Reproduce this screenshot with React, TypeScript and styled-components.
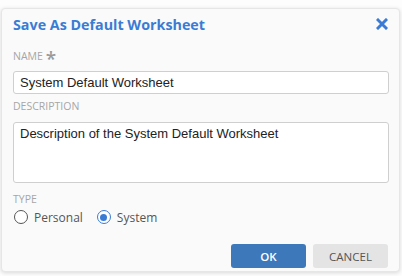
import styled, { createGlobalStyle } from "styled-components";

const GlobalStyle = createGlobalStyle`
  html, body {
    margin: 0;
    padding: 0;
    background: #fdfdfd;
  }
`;

const Page = styled.div`
  width: 402px;
  height: 276px;
  padding: 8px 2px 0 1px;
  box-sizing: border-box;
  overflow: hidden;
`;

const Dialog = styled.div`
  background: #fafafa;
  border: 1px solid #e6e6e6;
  border-radius: 4px;
  box-shadow: 0 1px 4px rgba(0, 0, 0, 0.15);
  height: 264px;
  box-sizing: border-box;
  padding: 0 10px 0 11px;
  display: flex;
  flex-direction: column;
  font-family: "Open Sans", "Noto Sans", sans-serif;
`;

const Header = styled.div`
  display: flex;
  justify-content: space-between;
  align-items: center;
  height: 30px;
`;

const Title = styled.h2`
  margin: 0;
  font-size: 14.3px;
  font-weight: 700;
  color: #3a7cd4;
`;

const Close = styled.button`
  border: none;
  background: none;
  padding: 0;
  margin-right: 1px;
  width: 12px;
  height: 12px;
  display: flex;
  cursor: pointer;
`;

const Label = styled.div<{ $top: number }>`
  margin-top: ${(p) => p.$top}px;
  font-size: 10.5px;
  color: #a6a6a6;
  text-transform: uppercase;
  height: 15px;
  line-height: 15px;
  display: flex;
  align-items: center;
  gap: 3px;
`;

const Star = styled.span`
  font-size: 19px;
  font-weight: 600;
  color: #9a9a9a;
  line-height: 15px;
  margin-top: 5px;
`;

const Input = styled.div<{ $top: number }>`
  margin-top: ${(p) => p.$top}px;
  height: 23px;
  border: 1px solid #cfcfcf;
  border-radius: 3px;
  background: #fff;
  box-sizing: border-box;
  padding: 0 6px;
  display: flex;
  align-items: center;
  font-family: "Liberation Sans", Arial, sans-serif;
  font-size: 13px;
  color: #222;
`;

const TextArea = styled(Input)`
  height: 61px;
  align-items: flex-start;
  padding-top: 3px;
`;

const RadioRow = styled.div`
  display: flex;
  align-items: center;
  gap: 14px;
  height: 20px;
  padding-left: 1px;
`;

const RadioItem = styled.label`
  display: flex;
  align-items: center;
  gap: 6px;
  font-size: 12px;
  color: #555;
`;

const Circle = styled.span<{ $on?: boolean }>`
  width: 14px;
  height: 14px;
  box-sizing: border-box;
  border-radius: 50%;
  border: 1.5px solid ${(p) => (p.$on ? "#3a7cd4" : "#555")};
  background: #fff;
  display: flex;
  align-items: center;
  justify-content: center;
  &::after {
    content: "";
    width: 7px;
    height: 7px;
    border-radius: 50%;
    background: ${(p) => (p.$on ? "#3a7cd4" : "transparent")};
  }
`;

const Footer = styled.div`
  display: flex;
  justify-content: flex-end;
  gap: 7px;
  margin-top: 17px;
  padding-right: 1px;
`;

const Button = styled.button<{ $primary?: boolean }>`
  width: 75px;
  height: 24px;
  border: none;
  border-radius: 3px;
  font-family: "Open Sans", "Noto Sans", sans-serif;
  font-size: 11.5px;
  font-weight: ${(p) => (p.$primary ? 600 : 400)};
  background: ${(p) => (p.$primary ? "#3d78bb" : "#e4e4e4")};
  color: ${(p) => (p.$primary ? "#fff" : "#555")};
  cursor: pointer;
`;

export default function App() {
  return (
    <>
      <GlobalStyle />
      <Page>
        <Dialog>
          <Header>
            <Title>Save As Default Worksheet</Title>
            <Close aria-label="close">
              <svg width="12" height="12" viewBox="0 0 12 12">
                <path d="M2 2 L10 10 M10 2 L2 10" stroke="#3a7cd4" strokeWidth="3" strokeLinecap="square" />
              </svg>
            </Close>
          </Header>
          <Label $top={10}>
            Name <Star>*</Star>
          </Label>
          <Input $top={7}>System Default Worksheet</Input>
          <Label $top={5}>Description</Label>
          <TextArea $top={8}>Description of the System Default Worksheet</TextArea>
          <Label $top={9}>Type</Label>
          <RadioRow>
            <RadioItem>
              <Circle />
              Personal
            </RadioItem>
            <RadioItem>
              <Circle $on />
              System
            </RadioItem>
          </RadioRow>
          <Footer>
            <Button $primary>OK</Button>
            <Button>CANCEL</Button>
          </Footer>
        </Dialog>
      </Page>
    </>
  );
}
